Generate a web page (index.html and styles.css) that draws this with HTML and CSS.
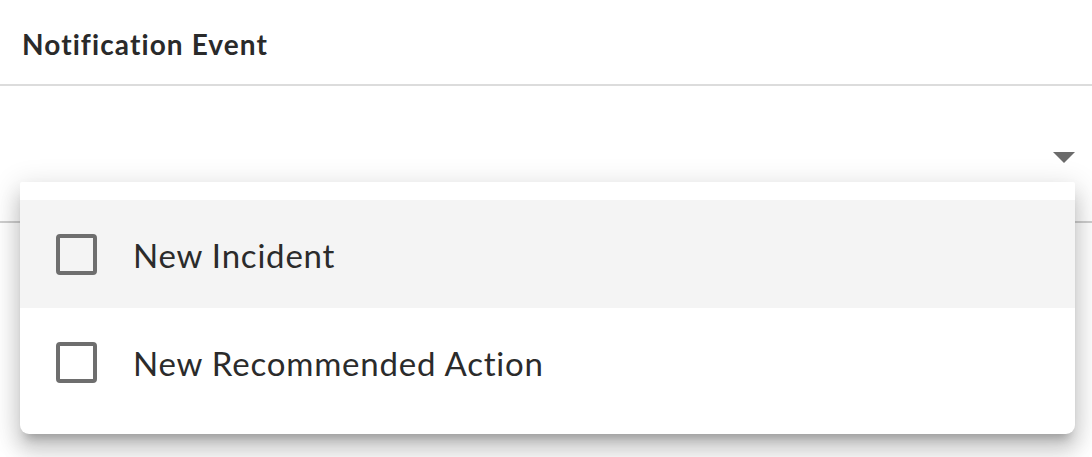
FILE: index.html
```html
<!DOCTYPE html>
<html>
<head>
<meta charset="utf-8">
<link rel="stylesheet" href="styles.css">
</head>
<body>
<div class="page">
  <header class="header">
    <h1 class="title">Notification Event</h1>
  </header>
  <div class="field">
    <div class="select">
      <span class="arrow"></span>
    </div>
  </div>
  <div class="menu">
    <div class="option option-active">
      <span class="checkbox"></span>
      <span class="label">New Incident</span>
    </div>
    <div class="option">
      <span class="checkbox"></span>
      <span class="label">New Recommended Action</span>
    </div>
  </div>
</div>
</body>
</html>
```

FILE: styles.css
```css
html, body {
  margin: 0;
  padding: 0;
  background: #ffffff;
}
body {
  width: 1092px;
  height: 457px;
  overflow: hidden;
  font-family: Lato, "Open Sans", sans-serif;
}
.page {
  position: relative;
  height: 457px;
}
.header {
  height: 84px;
  border-bottom: 2px solid #dcdcdc;
  display: flex;
  align-items: center;
  padding-left: 22px;
}
.title {
  margin: 0;
  padding-top: 4px;
  font-size: 28px;
  font-weight: 700;
  color: #2a2a2a;
  letter-spacing: 1.1px;
}
.field {
  height: 135px;
  border-bottom: 2px solid #cfcfcf;
  display: flex;
  justify-content: flex-end;
  align-items: center;
  padding-right: 17px;
}
.select {
  display: flex;
  align-items: center;
  padding-top: 8px;
}
.arrow {
  width: 0;
  height: 0;
  border-left: 11px solid transparent;
  border-right: 11px solid transparent;
  border-top: 11px solid #6b6b6b;
}
.menu {
  position: absolute;
  left: 20px;
  top: 182px;
  width: 1055px;
  padding: 18px 0;
  background: #ffffff;
  border-radius: 2px 2px 9px 9px;
  box-shadow: 0 10px 10px -6px rgba(0,0,0,0.22),
              0 16px 20px 2px rgba(0,0,0,0.14),
              0 6px 28px 4px rgba(0,0,0,0.12);
}
.option {
  height: 108px;
  display: flex;
  align-items: center;
  padding-left: 36px;
}
.option-active {
  background: #f4f4f4;
}
.checkbox {
  width: 33px;
  height: 33px;
  border: 4px solid #6e6e6e;
  border-radius: 4px;
  flex: none;
}
.label {
  margin-left: 36px;
  font-size: 33px;
  letter-spacing: 0.8px;
  color: #2b2b2b;
  padding-top: 1px;
}
```
